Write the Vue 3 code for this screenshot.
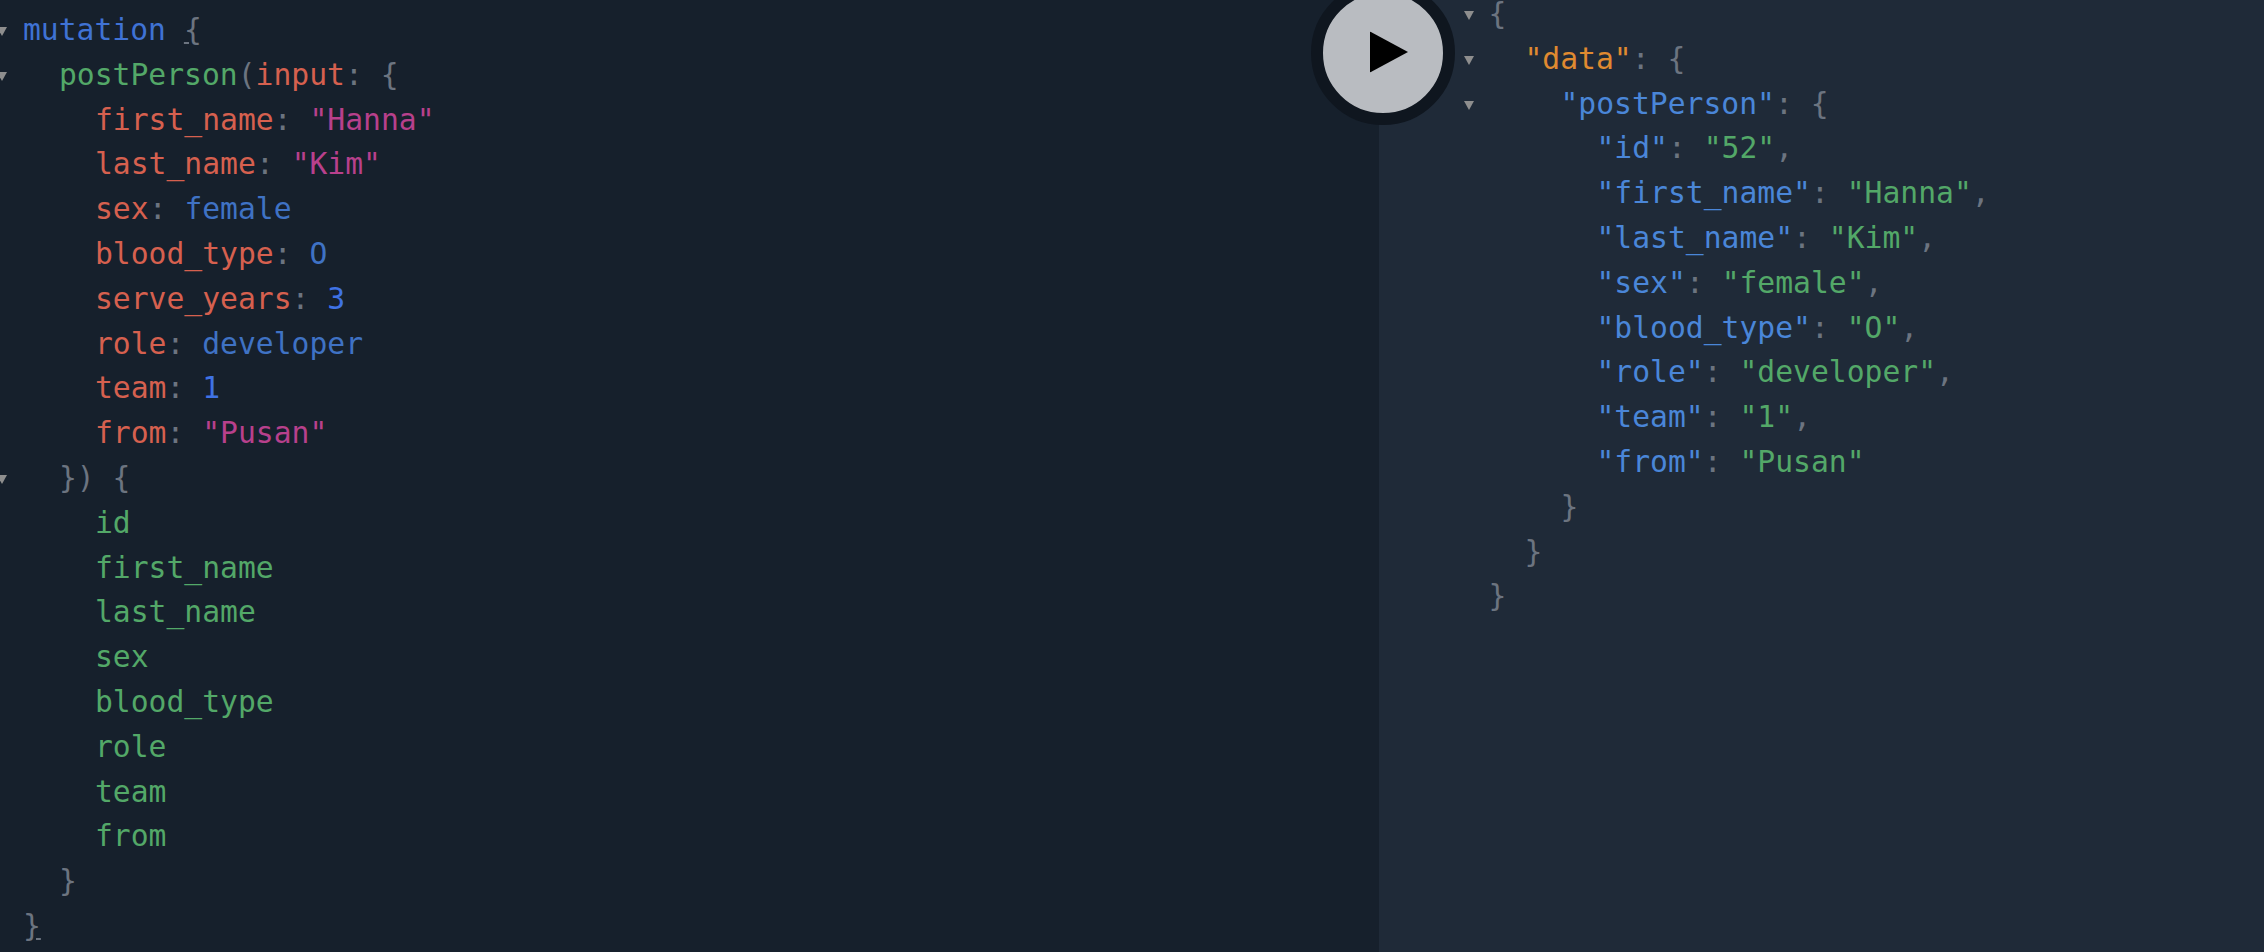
<script setup>
const K = 'kw', P = 'pu', D = 'def', A = 'attr', S = 'str', E = 'enum', N = 'num', U = 'punct-u'
const left = [
  { fold: true, t: [['mutation', K], [' ', P], ['{', U]] },
  { fold: true, i: 1, t: [['postPerson', D], ['(', P], ['input', A], [': {', P]] },
  { i: 2, t: [['first_name', A], [': ', P], ['"Hanna"', S]] },
  { i: 2, t: [['last_name', A], [': ', P], ['"Kim"', S]] },
  { i: 2, t: [['sex', A], [': ', P], ['female', E]] },
  { i: 2, t: [['blood_type', A], [': ', P], ['O', E]] },
  { i: 2, t: [['serve_years', A], [': ', P], ['3', N]] },
  { i: 2, t: [['role', A], [': ', P], ['developer', E]] },
  { i: 2, t: [['team', A], [': ', P], ['1', N]] },
  { i: 2, t: [['from', A], [': ', P], ['"Pusan"', S]] },
  { fold: true, i: 1, t: [['}) {', P]] },
  ...['id', 'first_name', 'last_name', 'sex', 'blood_type', 'role', 'team', 'from'].map((f) => ({ i: 2, t: [[f, D]] })),
  { i: 1, t: [['}', P]] },
  { t: [['}', U]] },
]
const JK = 'jkey', JS = 'jstr', JD = 'jdata'
const pair = (k, v, comma = true) => ({ i: 3, t: [[`"${k}"`, JK], [': ', P], [`"${v}"`, JS], ...(comma ? [[',', P]] : [])] })
const right = [
  { fold: true, t: [['{', P]] },
  { fold: true, i: 1, t: [['"data"', JD], [': {', P]] },
  { fold: true, i: 2, t: [['"postPerson"', JK], [': {', P]] },
  pair('id', '52'),
  pair('first_name', 'Hanna'),
  pair('last_name', 'Kim'),
  pair('sex', 'female'),
  pair('blood_type', 'O'),
  pair('role', 'developer'),
  pair('team', '1'),
  pair('from', 'Pusan', false),
  { i: 2, t: [['}', P]] },
  { i: 1, t: [['}', P]] },
  { t: [['}', P]] },
]
const panes = [
  { name: 'query', lines: left },
  { name: 'result', lines: right },
]
</script>

<template>
  <div class="app">
    <section v-for="pane in panes" :key="pane.name" class="pane" :class="pane.name">
      <div class="code">
        <div v-for="(line, n) in pane.lines" :key="n" class="line">
          <span class="gutter">
            <svg v-if="line.fold" class="fold" viewBox="0 0 10 9" width="10" height="9">
              <polygon points="0,0 10,0 5,9" />
            </svg>
          </span>
          <pre class="text" :class="'indent' + (line.i || 0)"><span v-for="(tok, j) in line.t" :key="j" :class="tok[1]">{{ tok[0] }}</span></pre>
        </div>
      </div>
    </section>
    <button class="run" type="button" aria-label="Run">
      <svg viewBox="0 0 38 41" width="38" height="41"><polygon points="0,0 38,20.5 0,41" /></svg>
    </button>
  </div>
</template>

<style>
html, body { margin: 0; background: #16202c; }
</style>

<style scoped>
.app {
  position: relative;
  display: flex;
  width: 2264px;
  height: 952px;
  overflow: hidden;
  font-family: "DejaVu Sans Mono", monospace;
}
.pane { overflow: hidden; }
.query { width: 1379px; flex: none; background: #16202c; }
.result { flex: 1; background: #1f2a38; }
.query .code { padding-top: 8px; }
.result .code { margin-top: -8px; padding-left: 85px; }
.line { display: flex; height: 44.8px; line-height: 44.8px; }
.gutter { flex: none; width: 23px; display: flex; align-items: center; }
.query .gutter { position: relative; left: -3px; }
.result .gutter { width: 24.5px; }
.fold { fill: #8e8e8e; display: block; margin-top: 3px; }
.text { margin: 0; font: inherit; font-size: 29.7px; line-height: inherit; white-space: pre; color: #6c7480; }
.indent1 { padding-left: 36px; }
.indent2 { padding-left: 72px; }
.indent3 { padding-left: 108px; }
.kw { color: #3f72d4; }
.pu { color: #6c7480; }
.punct-u { color: #6c7480; text-decoration: underline; }
.def { color: #53a868; }
.attr { color: #d6604f; }
.str { color: #b8408c; }
.enum { color: #3f72c4; }
.num { color: #3f72e4; }
.jkey { color: #4a86d8; }
.jstr { color: #53a868; }
.jdata { color: #e08a30; }
.run {
  position: absolute;
  left: 1311px;
  top: -19px;
  box-sizing: border-box;
  width: 144px;
  height: 144px;
  padding: 0;
  border: 12px solid #0f161f;
  border-radius: 50%;
  background: #b9bcc1;
  display: flex;
  align-items: center;
  justify-content: center;
}
.run svg { display: block; fill: #000; transform: translate(6px, -1.5px); }
</style>
